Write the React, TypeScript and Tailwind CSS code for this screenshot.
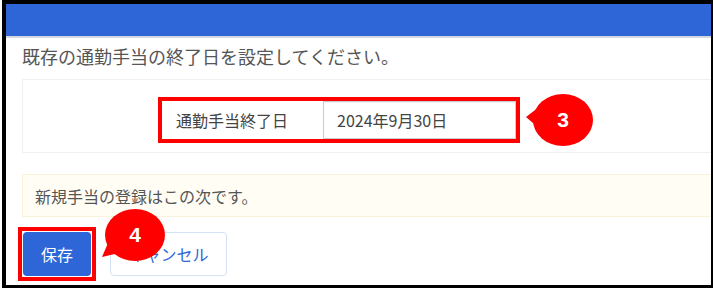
const jp = { fontFamily: '"Noto Sans CJK JP", "Noto Sans", sans-serif' };

function Badge({ n, tail, left, top }: { n: string; tail: string; left: number; top: number }) {
  return (
    <div className="absolute h-[64px] w-[72px]" style={{ left, top }}>
      <svg width="72" height="64" viewBox="0 0 72 64" className="absolute inset-0">
        <path d={tail} fill="#ff0000" />
        <ellipse cx="42" cy="30" rx="30" ry="26" fill="#ff0000" />
      </svg>
      <span
        className="absolute left-[12px] top-[4px] flex h-[52px] w-[60px] items-center justify-center text-[21px] font-bold text-white"
        style={{ fontFamily: '"Liberation Sans", Arial, sans-serif' }}
      >
        {n}
      </span>
    </div>
  );
}

export default function App() {
  return (
    <div className="relative h-[292px] w-[713px] overflow-hidden bg-white" style={jp}>
      <div className="ml-[2px] flex h-[288px] w-[711px] flex-col overflow-hidden border-b-[3px] border-l-4 border-r-2 border-t-4 border-black">
        <div className="h-[34px] shrink-0 border-b-2 border-[#d4d8df] bg-[#2e66d8]" />
        <div className="pl-4">
          <p className="pt-[5px] text-[18px] leading-[27px] text-[#555]">既存の通勤手当の終了日を設定してください。</p>

          <div className="mt-[9px] border border-r-0 border-[#eef0f2] pb-[9px] pl-[135px] pt-[17px]">
            <div className="flex w-[362px] border-4 border-[#ff0000]">
              <div className="flex h-[38px] w-[161px] items-center pl-[14px] text-[16px] text-[#444]">通勤手当終了日</div>
              <div className="flex h-[38px] flex-1 items-center border border-[#c9cdd3] bg-white pl-[13px] text-[16px] text-[#444] shadow-[inset_0_1px_1px_rgba(0,0,0,0.06)]">
                2024年9月30日
              </div>
            </div>
          </div>

          <div className="mt-[21px] flex h-[43px] items-center border border-r-0 border-[#faf3d9] bg-[#fffdf4] pl-[12px] text-[16px] text-[#555]">
            新規手当の登録はこの次です。
          </div>

          <div className="mt-[10px] flex items-center gap-[14px]">
            <div className="-ml-[4px] border-4 border-[#ff0000] p-[1px]">
              <button className="flex h-[44px] w-[68px] items-center justify-center rounded-[4px] bg-[#2e66d8] text-[16px] text-white">
                保存
              </button>
            </div>
            <button className="flex h-[44px] w-[117px] items-center justify-center rounded-[4px] border border-[#d3e1f4] bg-white text-[16px] text-[#2e66d8]">
              キャンセル
            </button>
          </div>
        </div>
      </div>

      <Badge n="3" left={521} top={90} tail="M5 27 L18 17 L20 40 Z" />
      <Badge n="4" left={93} top={205} tail="M9 52 L15 38 L26 48 Z" />
    </div>
  );
}
